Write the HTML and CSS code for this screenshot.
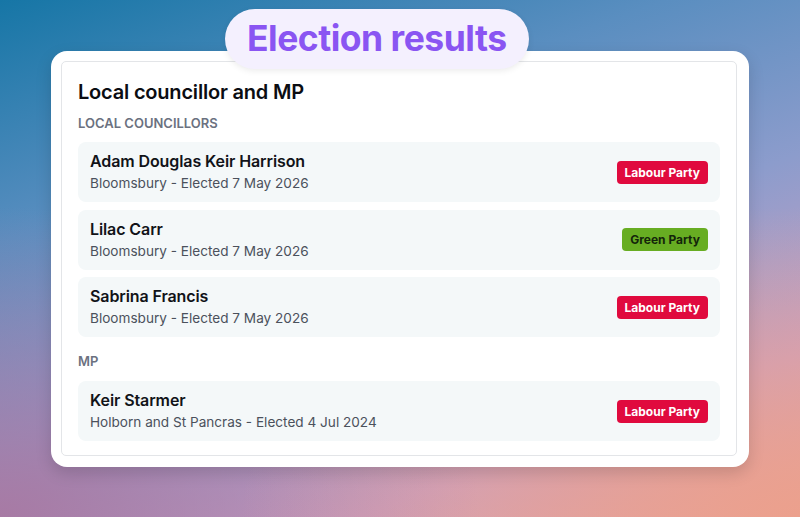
FILE: index.html
```html
<!DOCTYPE html>
<html lang="en">
<head>
<meta charset="utf-8">
<title>Election results</title>
<link rel="stylesheet" href="styles.css">
</head>
<body>
<div class="page">
  <div class="pill">Election results</div>
  <div class="card">
    <div class="panel">
      <h2 class="heading">Local councillor and MP</h2>
      <div class="label">LOCAL COUNCILLORS</div>
      <div class="list">
        <div class="row">
          <div class="info"><div class="name">Adam Douglas Keir Harrison</div><div class="sub">Bloomsbury - Elected 7 May 2026</div></div>
          <span class="badge labour">Labour Party</span>
        </div>
        <div class="row">
          <div class="info"><div class="name">Lilac Carr</div><div class="sub">Bloomsbury - Elected 7 May 2026</div></div>
          <span class="badge green">Green Party</span>
        </div>
        <div class="row">
          <div class="info"><div class="name">Sabrina Francis</div><div class="sub">Bloomsbury - Elected 7 May 2026</div></div>
          <span class="badge labour">Labour Party</span>
        </div>
      </div>
      <div class="label mp">MP</div>
      <div class="list">
        <div class="row">
          <div class="info"><div class="name">Keir Starmer</div><div class="sub">Holborn and St Pancras - Elected 4 Jul 2024</div></div>
          <span class="badge labour">Labour Party</span>
        </div>
      </div>
    </div>
  </div>
</div>
</body>
</html>
```

FILE: styles.css
```css
* { box-sizing: border-box; }
html, body { margin: 0; height: 517px; overflow: hidden; }
body {
  font-family: Inter, "Noto Sans", sans-serif;
  background:
    radial-gradient(ellipse 70% 60% at 100% 100%, rgba(236,160,140,0.95), rgba(236,160,140,0) 100%),
    radial-gradient(ellipse 60% 60% at 0% 100%, rgba(168,118,160,0.9), rgba(168,118,160,0) 100%),
    linear-gradient(160deg, #1676a6 0%, #5a8ec0 30%, #8c9ccc 55%, #c8a0c4 80%, #e6a49c 100%);
}
.page {
  width: 698px;
  margin: 0 auto;
  padding-top: 9px;
  display: flex;
  flex-direction: column;
}
.pill {
  position: relative;
  z-index: 2;
  align-self: flex-start;
  margin-left: 174px;
  height: 60px;
  padding: 0 22px;
  border-radius: 30px;
  background: #f4f0fe;
  color: #8a55f2;
  font-size: 35.5px;
  font-weight: 700;
  line-height: 60px;
  letter-spacing: -0.5px;
  box-shadow: 0 2px 6px rgba(0,0,0,0.08);
}
.card {
  margin-top: -18px;
  background: #fff;
  border-radius: 16px;
  padding: 10px 12px 11px 10px;
  box-shadow: 0 6px 16px rgba(0,0,0,0.15);
}
.panel {
  border: 1px solid #e3e5e8;
  border-radius: 5px;
  padding: 16px 16px 14px 16px;
}
.heading {
  margin: 0;
  font-size: 20px;
  font-weight: 600;
  line-height: 28px;
  color: #0b0d12;
  letter-spacing: -0.2px;
}
.label {
  margin-top: 7px;
  margin-bottom: 9px;
  font-size: 13px;
  font-weight: 600;
  line-height: 20px;
  color: #6b7180;
}
.label.mp { margin-top: 14px; margin-bottom: 10px; }
.list { display: flex; flex-direction: column; gap: 7.5px; }
.row {
  display: flex;
  align-items: center;
  justify-content: space-between;
  height: 60px;
  background: #f4f8f9;
  border-radius: 8px;
  padding: 0 12px;
}
.name {
  font-size: 16px;
  font-weight: 600;
  line-height: 20px;
  color: #111318;
  letter-spacing: -0.1px;
}
.sub {
  margin-top: 2px;
  font-size: 13.6px;
  line-height: 20px;
  color: #4b515c;
}
.badge {
  display: inline-block;
  height: 23px;
  line-height: 23px;
  padding: 0 8px;
  border-radius: 4px;
  font-size: 12px;
  font-weight: 700;
}
.badge.labour { background: #e00a3e; color: #fff; }
.badge.green { background: #67ad22; color: #13250a; }
```
